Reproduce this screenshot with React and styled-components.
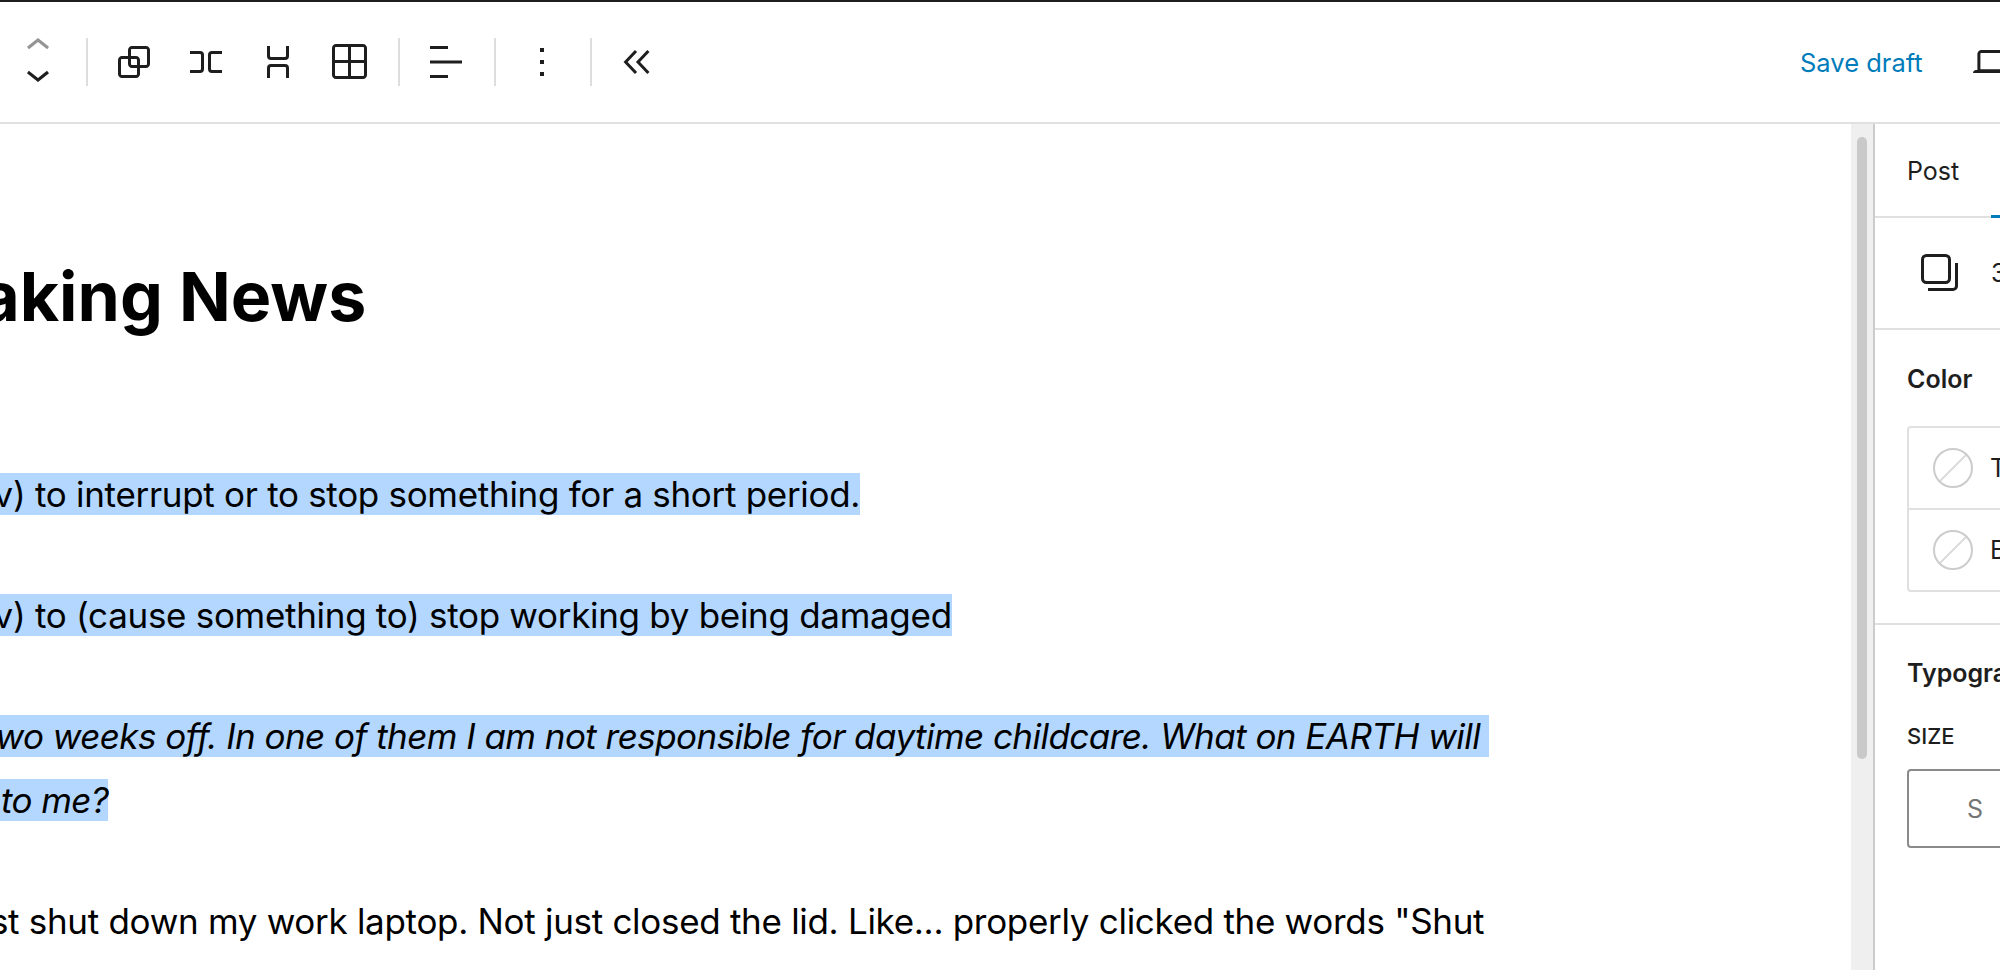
import styled, { createGlobalStyle } from "styled-components";

const GlobalStyle = createGlobalStyle`
  html, body {
    margin: 0;
    padding: 0;
    background: #fff;
    overflow: hidden;
  }
  body {
    font-family: Inter, "Liberation Sans", sans-serif;
    color: #1e1e1e;
  }
`;

const Icon = ({ children, size = 48 }) => (
  <svg width={size} height={size} viewBox="0 0 24 24" fill="#1e1e1e">
    {children}
  </svg>
);

const App = () => {
  return (
    <Page>
      <GlobalStyle />
      <Header>
        <Toolbar>
          <Mover>
            <svg width="48" height="24" viewBox="0 6 24 12" fill="#949494">
              <path d="M6.5 12.4L12 8l5.5 4.4-.9 1.2L12 10l-4.5 3.6-1-1.2z" />
            </svg>
            <svg width="48" height="24" viewBox="0 6 24 12" fill="#1e1e1e">
              <path d="M17.5 11.6L12 16l-5.5-4.4.9-1.2L12 14l4.5-3.6 1 1.2z" />
            </svg>
          </Mover>
          <Separator />
          <ToolGroup>
            <ToolButton aria-label="Group">
              <Icon>
                <path d="M18 4h-7c-1.1 0-2 .9-2 2v3H6c-1.1 0-2 .9-2 2v7c0 1.1.9 2 2 2h7c1.1 0 2-.9 2-2v-3h3c1.1 0 2-.9 2-2V6c0-1.1-.9-2-2-2zm-4.5 14c0 .3-.2.5-.5.5H6c-.3 0-.5-.2-.5-.5v-7c0-.3.2-.5.5-.5h3V13c0 1.1.9 2 2 2h2.5v3zm0-4.5H11c-.3 0-.5-.2-.5-.5v-2.5H13c.3 0 .5.2.5.5v2.5zm5-.5c0 .3-.2.5-.5.5h-3V11c0-1.1-.9-2-2-2h-2.5V6c0-.3.2-.5.5-.5h7c.3 0 .5.2.5.5v7z" />
              </Icon>
            </ToolButton>
            <ToolButton aria-label="Row">
              <Icon>
                <path d="M4 6.5h5a2 2 0 0 1 2 2v7a2 2 0 0 1-2 2H4V16h5a.5.5 0 0 0 .5-.5v-7A.5.5 0 0 0 9 8H4V6.5Zm16 0h-5a2 2 0 0 0-2 2v7a2 2 0 0 0 2 2h5V16h-5a.5.5 0 0 1-.5-.5v-7A.5.5 0 0 1 15 8h5V6.5Z" />
              </Icon>
            </ToolButton>
            <ToolButton aria-label="Stack">
              <Icon>
                <path d="M17.5 4v5a2 2 0 0 1-2 2h-7a2 2 0 0 1-2-2V4H8v5a.5.5 0 0 0 .5.5h7A.5.5 0 0 0 16 9V4h1.5Zm0 16v-5a2 2 0 0 0-2-2h-7a2 2 0 0 0-2 2v5H8v-5a.5.5 0 0 1 .5-.5h7a.5.5 0 0 1 .5.5v5h1.5Z" />
              </Icon>
            </ToolButton>
            <ToolButton aria-label="Grid">
              <Icon>
                <path
                  fillRule="evenodd"
                  d="m3 5c0-1.10457.89543-2 2-2h13.5c1.1046 0 2 .89543 2 2v13.5c0 1.1046-.8954 2-2 2h-13.5c-1.10457 0-2-.8954-2-2zm2-.5h6v6.5h-6.5v-6c0-.27614.22386-.5.5-.5zm-.5 8v6c0 .2761.22386.5.5.5h6v-6.5zm8 0v6.5h6c.2761 0 .5-.2239.5-.5v-6zm0-8v6.5h6.5v-6c0-.27614-.2239-.5-.5-.5z"
                />
              </Icon>
            </ToolButton>
          </ToolGroup>
          <Separator />
          <ToolButton aria-label="Align">
            <Icon>
              <path d="M4 4h9v1.5H4zM4 11.25h16v1.5H4zM4 18.5h9V20H4z" />
            </Icon>
          </ToolButton>
          <Separator />
          <ToolButton aria-label="Options">
            <Icon>
              <path d="M13 19h-2v-2h2v2zm0-6h-2v-2h2v2zm0-6h-2V5h2v2z" />
            </Icon>
          </ToolButton>
          <Separator />
          <ToolButton aria-label="Collapse">
            <Icon>
              <path
                d="M11 6.5L5.8 12l5.2 5.5M17.2 6.5L12 12l5.2 5.5"
                fill="none"
                stroke="#1e1e1e"
                strokeWidth="1.5"
              />
            </Icon>
          </ToolButton>
        </Toolbar>
        <SaveDraft>Save draft</SaveDraft>
        <Preview>
          <svg width="48" height="48" viewBox="0 0 24 24" fill="#1e1e1e">
            <path d="M20.5 16h-.7V8c0-1.1-.9-2-2-2H6.2c-1.1 0-2 .9-2 2v8h-.7c-.8 0-1.5.7-1.5 1.5h20c0-.8-.7-1.5-1.5-1.5zM5.7 8c0-.3.2-.5.5-.5h11.6c.3 0 .5.2.5.5v7.6H5.7V8z" />
          </svg>
        </Preview>
      </Header>
      <Body>
        <Canvas>
          <Content>
            <Title>Breaking News</Title>
            <Paragraph>
              <Selected>Break (v) to interrupt or to stop something for a short period.</Selected>
            </Paragraph>
            <Paragraph>
              <Selected>Break (v) to (cause something to) stop working by being damaged</Selected>
            </Paragraph>
            <Paragraph $italic>
              <Selected>
                I have two weeks off. In one of them I am not responsible for daytime childcare. What on EARTH will{" "}
              </Selected>
              <br />
              <Selected>that do to me?</Selected>
            </Paragraph>
            <Paragraph>
              Ok, I just shut down my work laptop. Not just closed the lid. Like... properly clicked the words "Shut
              Down"
            </Paragraph>
          </Content>
        </Canvas>
        <ScrollTrack>
          <ScrollThumb />
        </ScrollTrack>
        <Sidebar>
          <Tabs>
            <PostTab>Post</PostTab>
            <BlockTab>Block</BlockTab>
          </Tabs>
          <Summary>
            <svg width="38" height="38" viewBox="0 0 38 38" fill="none" stroke="#1e1e1e" strokeWidth="3">
              <rect x="1.5" y="1.5" width="27" height="27" rx="4" />
              <path d="M7 35.5h25a3.5 3.5 0 0 0 3.5-3.5V9" />
            </svg>
            <span>3 blocks selected</span>
          </Summary>
          <ColorPanel>
            <PanelTitle>Color</PanelTitle>
            <ColorBox>
              <ColorRow>
                <EmptySwatch />
                Text
              </ColorRow>
              <ColorRow>
                <EmptySwatch />
                Background
              </ColorRow>
            </ColorBox>
          </ColorPanel>
          <TypographyPanel>
            <PanelTitle>Typography</PanelTitle>
            <FieldLabel>SIZE</FieldLabel>
            <SizePicker>
              <SizeOption>S</SizeOption>
              <SizeOption>M</SizeOption>
            </SizePicker>
          </TypographyPanel>
        </Sidebar>
      </Body>
    </Page>
  );
};

const Page = styled.div`
  width: 2000px;
  height: 970px;
  display: flex;
  flex-direction: column;
  border-top: 2px solid #1e1e1e;
  box-sizing: border-box;
  overflow: hidden;
`;

const Header = styled.header`
  height: 122px;
  flex-shrink: 0;
  display: flex;
  align-items: center;
  border-bottom: 2px solid #e0e0e0;
  box-sizing: border-box;
  overflow: hidden;
`;

const Toolbar = styled.div`
  flex: 0 0 1800px;
  display: flex;
  align-items: center;
  padding-left: 14px;
  box-sizing: border-box;
`;

const Mover = styled.div`
  width: 48px;
  display: flex;
  flex-direction: column;
  gap: 4px;
  margin-top: -4px;
  svg {
    display: block;
  }
`;

const Separator = styled.div`
  width: 2px;
  height: 48px;
  background: #dddddd;
  margin: 0 22px 0 24px;
`;

const ToolGroup = styled.div`
  display: flex;
  gap: 24px;
`;

const ToolButton = styled.button`
  width: 48px;
  height: 48px;
  padding: 0;
  border: 0;
  background: none;
  svg {
    display: block;
  }
`;

const SaveDraft = styled.button`
  flex: 0 0 auto;
  width: 122px;
  padding: 0;
  border: 0;
  background: none;
  color: #007cba;
  font-family: Inter, "Liberation Sans", sans-serif;
  font-size: 25.5px;
  white-space: nowrap;
  text-align: left;
`;

const Preview = styled.div`
  flex: 0 0 48px;
  margin-left: 47px;
  svg {
    display: block;
  }
`;

const Body = styled.div`
  flex: 1;
  display: flex;
  min-height: 0;
`;

const Canvas = styled.main`
  flex: 1;
  min-width: 0;
  overflow: hidden;
`;

const Content = styled.div`
  width: 1619px;
  margin-left: -122px;
  padding-top: 127px;
`;

const Title = styled.h1`
  margin: 0 0 121px -10px;
  font-size: 68px;
  line-height: 90px;
  font-weight: 700;
  color: #000;
`;

const Paragraph = styled.p`
  margin: 0 0 57px;
  font-size: 35px;
  letter-spacing: ${(props) => (props.$italic ? "-0.55px" : "-0.3px")};
  line-height: 64px;
  color: #000;
  font-style: ${(props) => (props.$italic ? "italic" : "normal")};
`;

const Selected = styled.span`
  background: #b3d7fe;
  white-space: pre;
`;

const ScrollTrack = styled.div`
  flex: 0 0 22px;
  background: #efefef;
  padding: 13px 6px 0;
  box-sizing: border-box;
`;

const ScrollThumb = styled.div`
  height: 622px;
  border-radius: 6px;
  background: #c9c9c9;
`;

const Sidebar = styled.aside`
  flex: 0 0 127px;
  width: 127px;
  border-left: 2px solid #cccccc;
  box-sizing: border-box;
  overflow: hidden;
  font-size: 25px;
  color: #1e1e1e;
`;

const Tabs = styled.div`
  width: 400px;
  height: 94px;
  display: flex;
  border-bottom: 2px solid #e0e0e0;
  box-sizing: border-box;
`;

const PostTab = styled.div`
  width: 116px;
  padding: 2px 0 0 32px;
  box-sizing: border-box;
  display: flex;
  align-items: center;
`;

const BlockTab = styled.div`
  padding: 0 32px;
  display: flex;
  align-items: center;
  margin-bottom: -2px;
  border-bottom: 3px solid #007cba;
`;

const Summary = styled.div`
  width: 400px;
  height: 112px;
  display: flex;
  align-items: center;
  gap: 32px;
  padding-left: 46px;
  border-bottom: 2px solid #e0e0e0;
  box-sizing: border-box;
  white-space: nowrap;
`;

const ColorPanel = styled.section`
  width: 500px;
  padding: 33px 32px 31px;
  border-bottom: 2px solid #e0e0e0;
  box-sizing: border-box;
`;

const TypographyPanel = styled.section`
  width: 500px;
  padding: 32px 32px 32px;
  box-sizing: border-box;
`;

const PanelTitle = styled.h2`
  margin: 0 0 32px;
  font-size: 25px;
  line-height: 32px;
  font-weight: 600;
`;

const ColorBox = styled.div`
  margin-top: -1px;
  border: 2px solid #e0e0e0;
  border-radius: 4px;
`;

const ColorRow = styled.div`
  height: 80px;
  display: flex;
  align-items: center;
  gap: 17px;
  padding-left: 24px;
  & + & {
    border-top: 2px solid #e0e0e0;
  }
`;

const EmptySwatch = styled.span`
  width: 40px;
  height: 40px;
  border: 2px solid #cccccc;
  border-radius: 50%;
  box-sizing: border-box;
  background: linear-gradient(-45deg, transparent 48%, #dddddd 48%, #dddddd 52%, transparent 52%);
`;

const FieldLabel = styled.div`
  margin: 1px 0 18px;
  font-size: 22px;
  line-height: 30px;
  font-weight: 500;
`;

const SizePicker = styled.div`
  height: 79px;
  display: flex;
  border: 2px solid #8a8a8a;
  border-radius: 4px;
  box-sizing: border-box;
`;

const SizeOption = styled.div`
  width: 132px;
  display: flex;
  align-items: center;
  justify-content: center;
  color: #757575;
`;

export default App;
